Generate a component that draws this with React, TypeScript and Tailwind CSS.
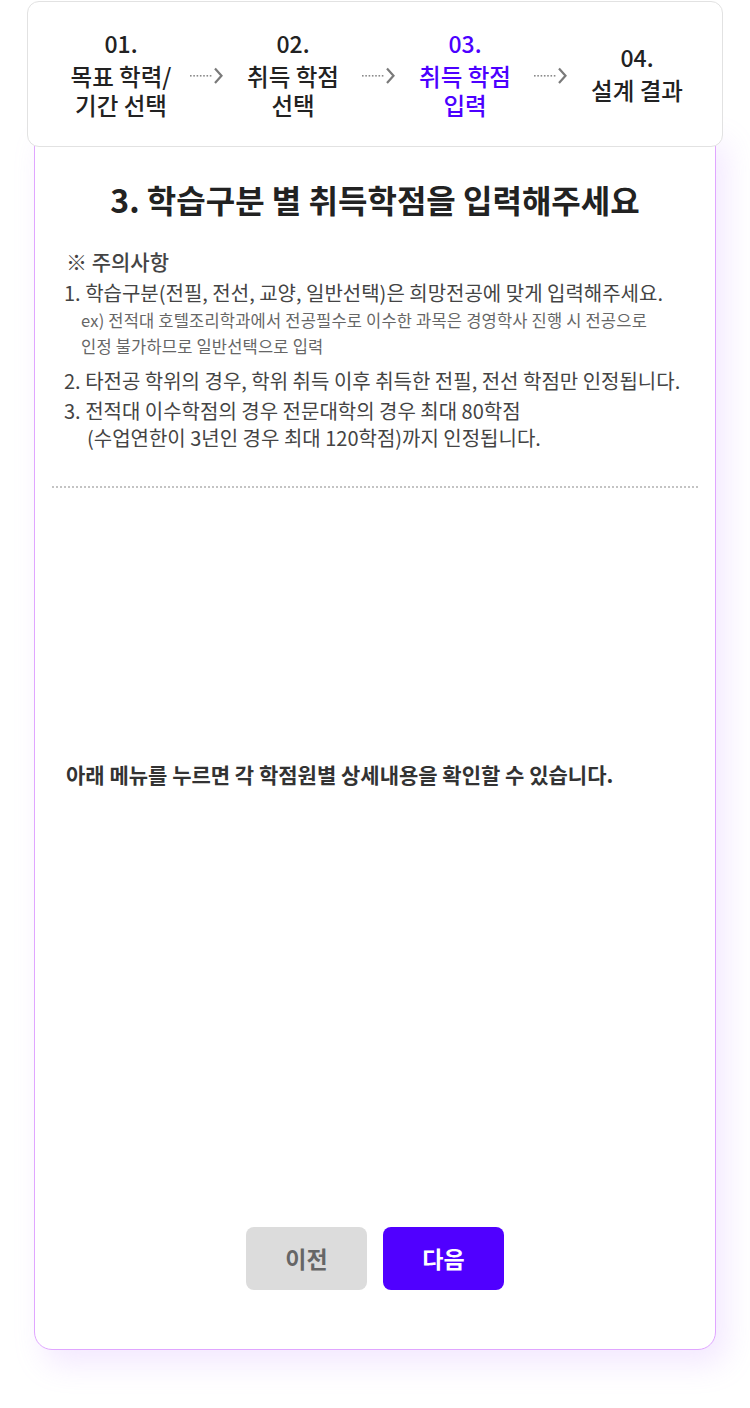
import React from "react";

const font = { fontFamily: '"Noto Sans CJK KR", "Noto Sans", sans-serif' };

const steps = [
  { no: "01.", lines: ["목표 학력/", "기간 선택"], active: false },
  { no: "02.", lines: ["취득 학점", "선택"], active: false },
  { no: "03.", lines: ["취득 학점", "입력"], active: true },
  { no: "04.", lines: ["설계 결과"], active: false },
];

function Arrow() {
  return (
    <svg width="36" height="18" viewBox="0 0 36 18" className="shrink-0">
      {[0, 3.3, 6.6, 9.9, 13.2, 16.5, 19.8].map((x) => (
        <rect key={x} x={x + 1} y="9" width="1.6" height="1.6" fill="#8a8a8a" />
      ))}
      <path d="M26 2.5 L32.5 9.8 L26 17" fill="none" stroke="#7a7a7a" strokeWidth="2.2" />
    </svg>
  );
}

export default function App() {
  return (
    <div className="w-[750px] min-h-[1408px] bg-white px-[27px] pt-[1px]" style={font}>
      {/* stepper */}
      <div className="relative z-10 flex h-[146px] items-center rounded-[12px] border border-[#e2e2e2] bg-white pl-[28px]">
        {steps.map((s, i) => (
          <React.Fragment key={s.no}>
            {i > 0 && (
              <div className="flex w-[42px] justify-center pt-[2px]">
                <Arrow />
              </div>
            )}
            <div
              className={
                "flex w-[130px] flex-col items-center text-[23.5px] font-medium leading-[29px] " +
                (s.active ? "text-[#4c00ff]" : "text-[#222]")
              }
            >
              <span className="mb-[4px] text-[23px]">{s.no}</span>
              {s.lines.map((l) => (
                <span key={l}>{l}</span>
              ))}
            </div>
          </React.Fragment>
        ))}
      </div>

      {/* main card */}
      <div className="mx-[7px] -mt-[17px] rounded-b-[18px] border border-[#e0a6ff] bg-white pb-[59px] pt-[48px] shadow-[10px_14px_30px_rgba(200,150,255,0.22)]">
        <h1 className="text-center text-[32px] font-bold leading-[40px] text-[#222]">
          3. 학습구분 별 취득학점을 입력해주세요
        </h1>

        <div className="mt-[28px] px-[29px] text-[#444]">
          <p className="pl-[2px] text-[21px] font-medium leading-[28px]">※ 주의사항</p>
          <p className="mt-[4px] text-[20px] leading-[28px]">
            1. 학습구분(전필, 전선, 교양, 일반선택)은 희망전공에 맞게 입력해주세요.
          </p>
          <p className="pl-[17px] text-[16.5px] leading-[26px] tracking-[0.2px] text-[#666]">
            ex) 전적대 호텔조리학과에서 전공필수로 이수한 과목은 경영학사 진행 시 전공으로
            <br />
            인정 불가하므로 일반선택으로 입력
          </p>
          <p className="mt-[8px] text-[20px] leading-[28px]">
            2. 타전공 학위의 경우, 학위 취득 이후 취득한 전필, 전선 학점만 인정됩니다.
          </p>
          <p className="mt-[2px] text-[20px] leading-[27px]">
            3. 전적대 이수학점의 경우 전문대학의 경우 최대 80학점
            <br />
            <span className="pl-[23px]">(수업연한이 3년인 경우 최대 120학점)까지 인정됩니다.</span>
          </p>
        </div>

        <div className="mx-[17px] mt-[35px] border-t-2 border-dotted border-[#c4c4c4]" />

        <p className="mt-[272px] px-[31px] text-[21px] font-bold leading-[28px] text-[#333]">
          아래 메뉴를 누르면 각 학점원별 상세내용을 확인할 수 있습니다.
        </p>

        <div className="mt-[439px] flex justify-center gap-[16px]">
          <button className="h-[63px] w-[121px] rounded-[8px] bg-[#dcdcdc] text-[23px] font-bold text-[#666]">
            이전
          </button>
          <button className="h-[63px] w-[121px] rounded-[8px] bg-[#5000ff] text-[23px] font-bold text-white">
            다음
          </button>
        </div>
      </div>
    </div>
  );
}
